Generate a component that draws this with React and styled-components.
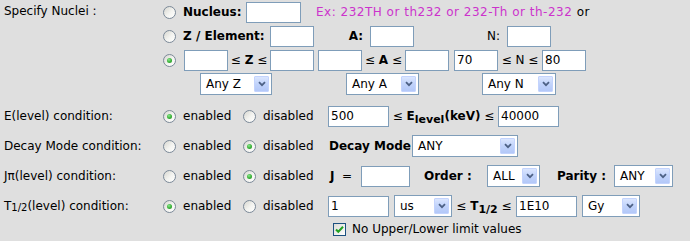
import styled, { createGlobalStyle } from "styled-components";

const GlobalStyle = createGlobalStyle`
  html, body { margin: 0; padding: 0; background: #dfdfdf; }
  body { font-family: "DejaVu Sans", Verdana, sans-serif; font-size: 12px; color: #000; }
`;

const Page = styled.div`
  width: 690px;
  height: 241px;
  overflow: hidden;
  background: #dfdfdf;
  display: flex;
  flex-direction: column;
`;

const Row = styled.div`
  display: grid;
  grid-template-columns: 160px 1fr;
  height: ${p => p.$h}px;
  margin-bottom: ${p => p.$mb || 0}px;
`;

const Label = styled.div`
  padding-left: 4px;
  padding-top: ${p => p.$pt || 0}px;
  display: flex;
  align-items: ${p => (p.$top ? "flex-start" : "center")};
  white-space: nowrap;
`;

const Content = styled.div`
  display: flex;
  flex-direction: column;
`;

const Line = styled.div`
  display: flex;
  align-items: center;
  height: ${p => p.$h || 24}px;
  white-space: nowrap;
`;

const Txt = styled.span`
  flex: none;
  width: ${p => (p.$w ? `${p.$w}px` : "auto")};
  margin-left: ${p => p.$ml || 0}px;
  padding-right: ${p => p.$pr || 0}px;
  box-sizing: border-box;
  text-align: ${p => p.$align || "left"};
  font-weight: ${p => (p.$bold ? "bold" : "normal")};
  color: ${p => p.$color || "#000"};
  letter-spacing: ${p => p.$ls || 0}px;
`;

const Sub = styled.span`
  font-size: ${p => p.$size || 10}px;
  position: relative;
  top: 3px;
`;

const RadioDot = styled.span`
  flex: none;
  box-sizing: border-box;
  width: 13px;
  height: 13px;
  border-radius: 50%;
  border: 1px solid #7b8998;
  background: linear-gradient(135deg, #d6d6d0 0%, #f4f4f1 55%, #ffffff 100%);
  margin-left: ${p => p.$ml || 0}px;
  margin-right: ${p => (p.$mr != null ? p.$mr : 7)}px;
  display: inline-flex;
  align-items: center;
  justify-content: center;
  &::after {
    content: "";
    display: ${p => (p.$on ? "block" : "none")};
    width: 5px;
    height: 5px;
    border-radius: 50%;
    background: radial-gradient(circle at 40% 35%, #8fe88f 0%, #3cb43c 50%, #1d8f1d 100%);
  }
`;

const Field = styled.input`
  flex: none;
  box-sizing: border-box;
  width: ${p => p.$w}px;
  height: 21px;
  margin: 0 0 0 ${p => p.$ml || 0}px;
  padding: 0 2px;
  border: 1px solid #7f9db9;
  background: #fff;
  font: 12px "DejaVu Sans", Verdana, sans-serif;
  color: #000;
  outline: none;
`;

const SelectBox = styled.div`
  flex: none;
  box-sizing: border-box;
  width: ${p => p.$w}px;
  height: 22px;
  margin-left: ${p => p.$ml || 0}px;
  border: 1px solid #7f9db9;
  background: #fff;
  padding: 0 2px 0 5px;
  display: flex;
  align-items: center;
  font-size: 12px;
`;

const ArrowBtn = styled.span`
  margin-left: auto;
  box-sizing: border-box;
  width: 15px;
  height: 16px;
  border: 1px solid #c3d3fd;
  border-radius: 1px;
  background: linear-gradient(180deg, #dbe6fe 0%, #c1d3fb 50%, #b3c8f8 100%);
  display: flex;
  align-items: center;
  justify-content: center;
`;

const CheckBox = styled.span`
  flex: none;
  box-sizing: border-box;
  width: 13px;
  height: 13px;
  margin-left: ${p => p.$ml || 0}px;
  margin-right: 6px;
  border: 1px solid #1c5180;
  background: linear-gradient(135deg, #dcdcd7 0%, #ffffff 100%);
  display: flex;
  align-items: center;
  justify-content: center;
`;

const Radio = ({ on, ml, mr }) => <RadioDot $on={on} $ml={ml} $mr={mr} />;

const Select = ({ w, ml, children }) => (
  <SelectBox $w={w} $ml={ml}>
    <span>{children}</span>
    <ArrowBtn>
      <svg width="8" height="6" viewBox="0 0 8 6">
        <path d="M1 1.2 L4 4.2 L7 1.2" fill="none" stroke="#4d6185" strokeWidth="1.8" />
      </svg>
    </ArrowBtn>
  </SelectBox>
);

const Toggle = ({ enabled }) => (
  <>
    <Radio ml={3} on={enabled} />
    <Txt $w={60}>enabled</Txt>
    <Radio on={!enabled} />
    <Txt $w={65}>disabled</Txt>
  </>
);

export default function App() {
  return (
    <Page>
      <GlobalStyle />

      <Row $h={96} $mb={5}>
        <Label $top $pt={4}>Specify Nuclei :</Label>
        <Content>
          <Line>
            <Radio ml={3} />
            <Txt $w={63} $bold>Nucleus:</Txt>
            <Field $w={55} />
            <Txt $ml={15} $color="#cc33cc" $ls={0.5}>Ex: 232TH or th232 or 232-Th or th-232</Txt>
            <Txt $ls={0.5}>&nbsp;or</Txt>
          </Line>
          <Line>
            <Radio ml={3} />
            <Txt $w={87} $bold>Z / Element:</Txt>
            <Field $w={44} />
            <Txt $w={56} $pr={7} $align="right" $bold>A:</Txt>
            <Field $w={44} />
            <Txt $w={93} $pr={7} $align="right">N:</Txt>
            <Field $w={44} />
          </Line>
          <Line>
            <Radio ml={3} mr={8} on />
            <Field $w={44} />
            <Txt $w={42} $align="center">≤ <b>Z</b> ≤</Txt>
            <Field $w={44} />
            <Field $w={44} $ml={4} />
            <Txt $w={43} $align="center">≤ <b>A</b> ≤</Txt>
            <Field $w={44} />
            <Field $w={44} $ml={5} defaultValue="70" />
            <Txt $w={44} $align="center">≤ N ≤</Txt>
            <Field $w={44} defaultValue="80" />
          </Line>
          <Line>
            <Select w={72} ml={40}>Any Z</Select>
            <Select w={73} ml={74}>Any A</Select>
            <Select w={74} ml={63}>Any N</Select>
          </Line>
        </Content>
      </Row>

      <Row $h={30}>
        <Label>E(level) condition:</Label>
        <Line $h={30}>
          <Toggle enabled />
          <Field $w={61} defaultValue="500" />
          <Txt $w={109} $align="center">
            ≤ <b>E<Sub $size={11}>level</Sub>(keV)</b> ≤
          </Txt>
          <Field $w={61} defaultValue="40000" />
        </Line>
      </Row>

      <Row $h={30}>
        <Label>Decay Mode condition:</Label>
        <Line $h={30}>
          <Toggle />
          <Txt $w={83} $ml={1} $bold>Decay Mode</Txt>
          <Select w={106}>ANY</Select>
        </Line>
      </Row>

      <Row $h={30}>
        <Label>Jπ(level) condition:</Label>
        <Line $h={30}>
          <Toggle />
          <Txt $w={31} $ml={2}><b>J</b>&nbsp;&nbsp;=</Txt>
          <Field $w={49} />
          <Txt $w={63} $ml={14} $bold>Order :</Txt>
          <Select w={53}>ALL</Select>
          <Txt $w={57} $ml={17} $bold>Parity :</Txt>
          <Select w={59}>ANY</Select>
        </Line>
      </Row>

      <Row $h={48}>
        <Label $top $pt={8}>T<Sub>1/2</Sub>(level) condition:</Label>
        <Content>
          <Line $h={30}>
            <Toggle enabled />
            <Field $w={61} defaultValue="1" />
            <Select w={58} ml={5}>us</Select>
            <Txt $w={64} $align="center">
              ≤ <b>T<Sub $size={11}>1/2</Sub></b> ≤
            </Txt>
            <Field $w={61} defaultValue="1E10" />
            <Select w={58} ml={5}>Gy</Select>
          </Line>
          <Line $h={16}>
            <CheckBox $ml={173}>
              <svg width="9" height="9" viewBox="0 0 9 9">
                <path d="M1 4.5 L3.3 6.8 L8 1.8" fill="none" stroke="#21a121" strokeWidth="2" />
              </svg>
            </CheckBox>
            <Txt>No Upper/Lower limit values</Txt>
          </Line>
        </Content>
      </Row>
    </Page>
  );
}
